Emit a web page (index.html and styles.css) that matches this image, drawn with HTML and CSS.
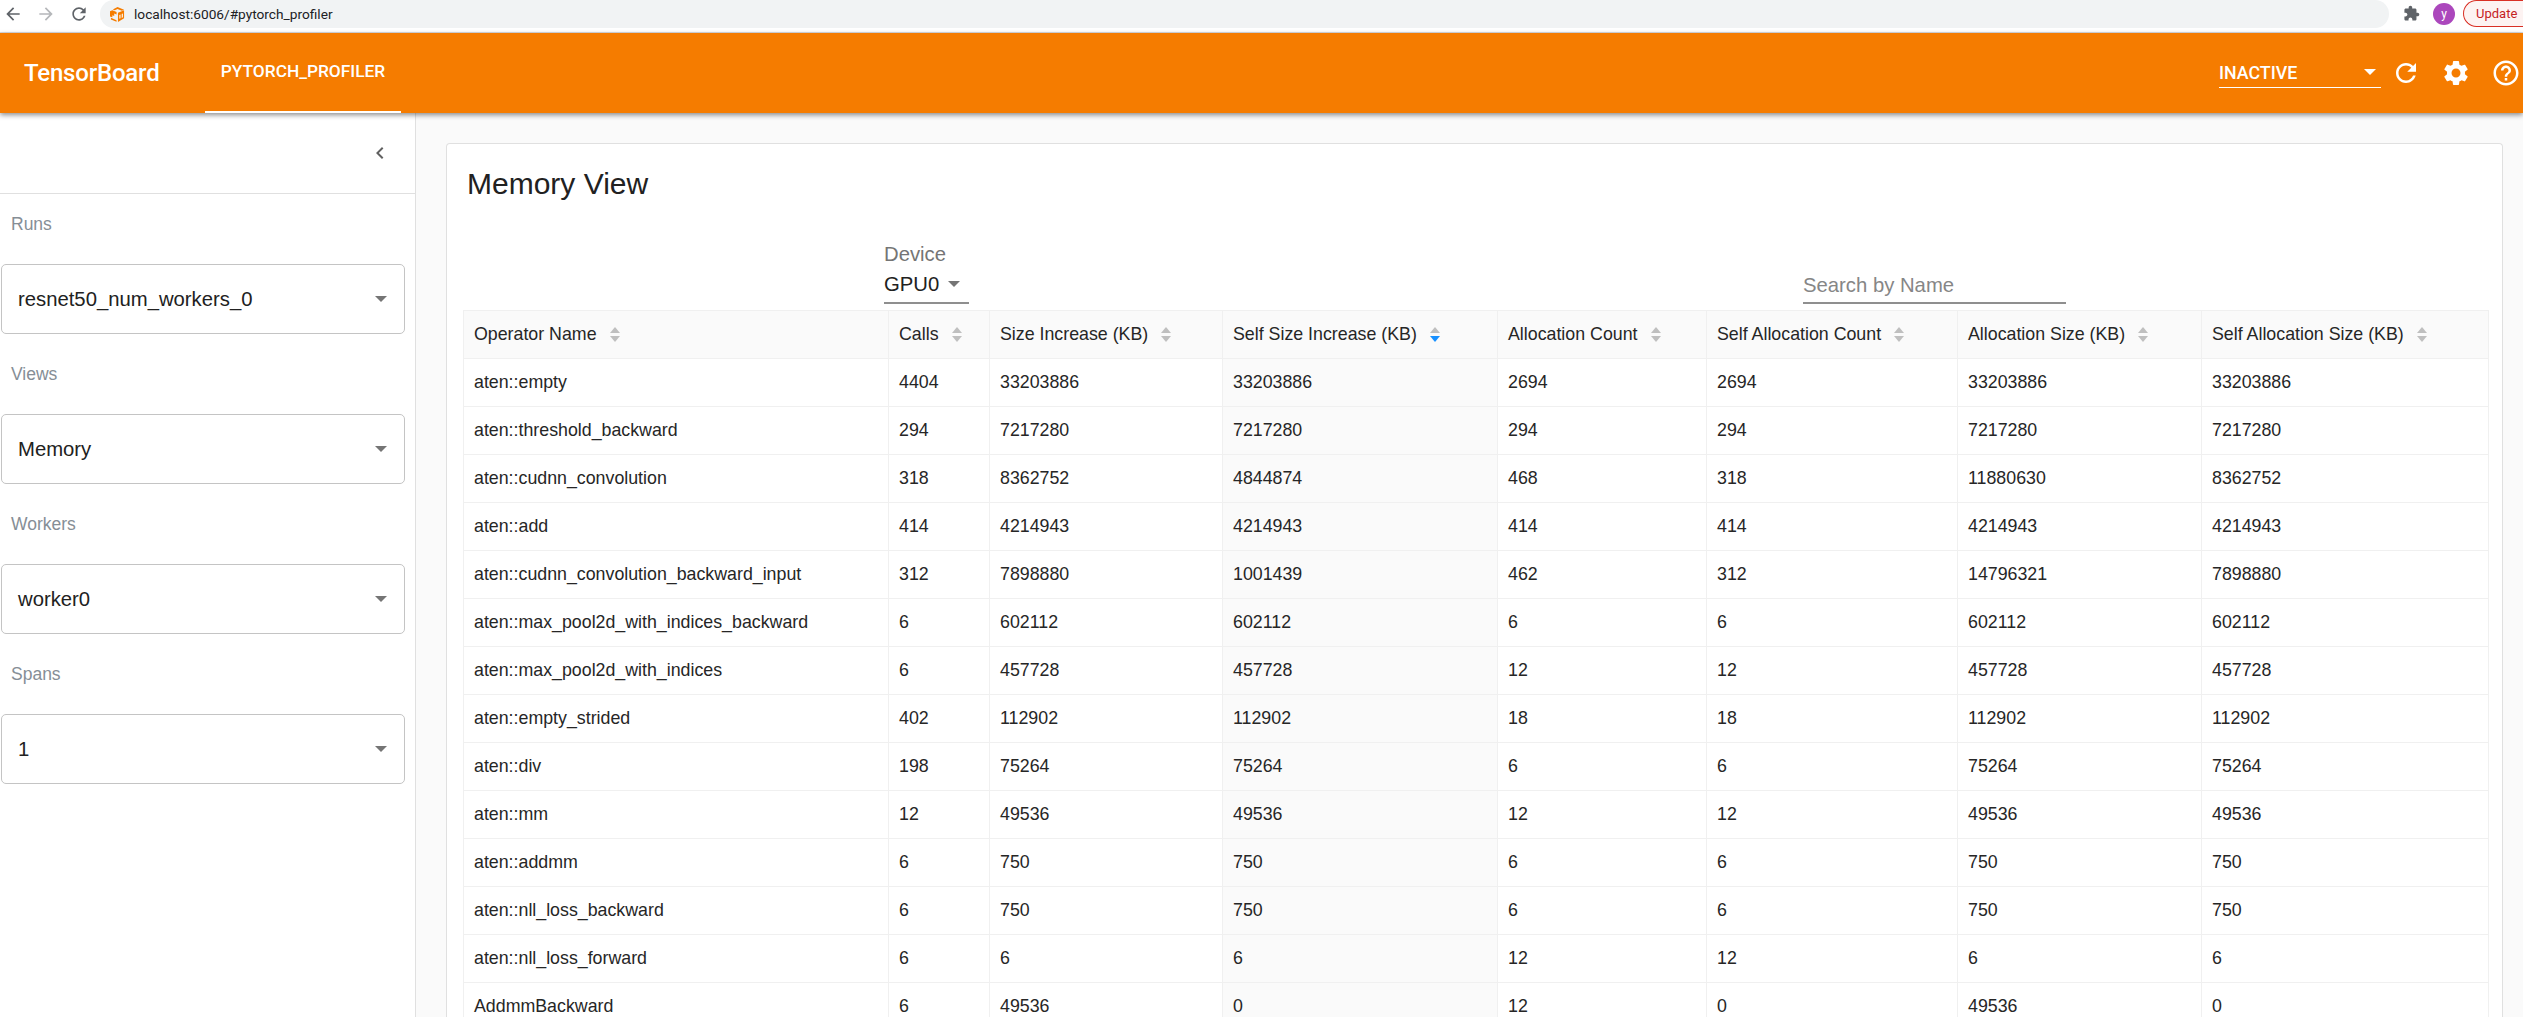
FILE: index.html
```html
<!DOCTYPE html>
<html lang="en">
<head>
<meta charset="utf-8">
<title>TensorBoard</title>
<link rel="stylesheet" href="styles.css">
</head>
<body>
<div class="chrome">
  <svg class="nav-icon" viewBox="0 0 24 24"><path fill="#5f6368" d="M20 11H7.83l5.59-5.59L12 4l-8 8 8 8 1.41-1.41L7.83 13H20v-2z"/></svg>
  <svg class="nav-icon" viewBox="0 0 24 24"><path fill="#b5b7ba" d="M12 4l-1.41 1.41L16.17 11H4v2h12.17l-5.58 5.59L12 20l8-8z"/></svg>
  <svg class="nav-icon" viewBox="0 0 24 24"><path fill="#5f6368" d="M17.65 6.35C16.2 4.9 14.21 4 12 4c-4.42 0-7.99 3.58-7.99 8s3.57 8 7.99 8c3.73 0 6.84-2.55 7.73-6h-2.08c-.82 2.33-3.04 4-5.65 4-3.31 0-6-2.69-6-6s2.69-6 6-6c1.66 0 3.14.69 4.22 1.78L13 11h7V4l-2.35 2.35z"/></svg>
  <div class="omnibox">
    <svg class="favicon" viewBox="0 0 16 16"><path fill="#f57c00" d="M8 0l7 3-2.4 1.1L8 2.2 5 3.4 3 2.6zM0 4.5l2.5-1L7 5.400V8L4.500 6.900V9.500L2.500 8.700V11L0 10zM8.500 6l6.500-2.600V12L8.500 16zM1 11.500l6 2.500v1.800L1 13.300z"/><path fill="#fff" d="M10 8.500l1.200-.5v4l-1.200.6zM12.500 7.500l1.200-.5v4l-1.200.6z"/></svg>
    <span class="url">localhost:6006/#pytorch_profiler</span>
  </div>
  <svg class="puzzle" viewBox="0 0 24 24"><path fill="#5f6368" d="M20.500 11H19V7c0-1.100-.9-2-2-2h-4V3.500C13 2.120 11.880 1 10.500 1S8 2.120 8 3.500V5H4c-1.100 0-1.990.9-1.990 2v3.800H3.500c1.490 0 2.700 1.210 2.700 2.700s-1.210 2.700-2.700 2.700H2V20c0 1.100.9 2 2 2h3.800v-1.500c0-1.490 1.210-2.700 2.700-2.700 1.490 0 2.700 1.210 2.700 2.700V22H17c1.100 0 2-.9 2-2v-4h1.500c1.380 0 2.500-1.120 2.500-2.500S21.880 11 20.500 11z"/></svg>
  <span class="avatar">y</span>
  <span class="update">Update</span>
</div>

<header class="appbar">
  <span class="brand">TensorBoard</span>
  <span class="tab">PYTORCH_PROFILER</span>
  <div class="status"><span>INACTIVE</span><i class="caret caret-white"></i></div>
  <svg class="bar-icon bar-refresh" viewBox="0 0 24 24"><path fill="#fff" d="M17.650 6.350C16.200 4.900 14.210 4 12 4c-4.420 0-7.990 3.580-7.990 8s3.570 8 7.990 8c3.730 0 6.840-2.550 7.730-6h-2.080c-.82 2.330-3.040 4-5.650 4-3.310 0-6-2.690-6-6s2.690-6 6-6c1.660 0 3.140.69 4.220 1.780L13 11h7V4l-2.350 2.350z"/></svg>
  <svg class="bar-icon" viewBox="0 0 24 24"><path fill="#fff" d="M19.140 12.940c.04-.3.06-.61.06-.94 0-.32-.02-.64-.07-.94l2.030-1.580c.18-.14.23-.41.12-.61l-1.920-3.320c-.12-.22-.37-.29-.59-.22l-2.390.96c-.5-.38-1.030-.7-1.620-.94l-.36-2.540c-.04-.24-.24-.41-.48-.41h-3.840c-.24 0-.43.17-.47.41l-.36 2.540c-.59.24-1.130.57-1.620.94l-2.390-.96c-.22-.08-.47 0-.59.22L2.740 8.870c-.12.21-.08.47.12.61l2.030 1.580c-.05.3-.09.63-.09.94s.02.64.07.94l-2.030 1.580c-.18.14-.23.41-.12.61l1.920 3.320c.12.22.37.29.59.22l2.390-.96c.5.38 1.030.7 1.620.94l.36 2.540c.05.24.24.41.48.41h3.840c.24 0 .44-.17.47-.41l.36-2.540c.59-.24 1.130-.56 1.620-.94l2.390.96c.22.08.47 0 .59-.22l1.920-3.320c.12-.22.07-.47-.12-.61l-2.010-1.580zM12 15.600c-1.980 0-3.600-1.620-3.600-3.600s1.620-3.600 3.600-3.600 3.600 1.620 3.600 3.600-1.620 3.600-3.600 3.600z"/></svg>
  <svg class="bar-icon" viewBox="0 0 24 24"><path fill="#fff" d="M11 18h2v-2h-2v2zm1-16C6.480 2 2 6.480 2 12s4.480 10 10 10 10-4.480 10-10S17.520 2 12 2zm0 18c-4.410 0-8-3.590-8-8s3.590-8 8-8 8 3.590 8 8-3.590 8-8 8zm0-14c-2.210 0-4 1.790-4 4h2c0-1.100.9-2 2-2s2 .9 2 2c0 2-3 1.750-3 5h2c0-2.250 3-2.500 3-5 0-2.210-1.790-4-4-4z"/></svg>
</header>

<div class="main">
  <aside class="sidebar">
    <div class="side-head">
      <svg class="chevron" viewBox="0 0 24 24"><path fill="#616161" d="M15.410 7.410L14 6l-6 6 6 6 1.410-1.410L10.830 12z"/></svg>
    </div>
    <div class="group"><div class="group-label">Runs</div><div class="select"><span>resnet50_num_workers_0</span><i class="caret"></i></div></div>
    <div class="group"><div class="group-label">Views</div><div class="select"><span>Memory</span><i class="caret"></i></div></div>
    <div class="group"><div class="group-label">Workers</div><div class="select"><span>worker0</span><i class="caret"></i></div></div>
    <div class="group"><div class="group-label">Spans</div><div class="select"><span>1</span><i class="caret"></i></div></div>
  </aside>

  <section class="content">
    <div class="card">
      <h1 class="title">Memory View</h1>
      <div class="filters">
        <div class="device">
          <div class="device-label">Device</div>
          <div class="device-value"><span>GPU0</span><i class="caret"></i></div>
        </div>
        <div class="search">Search by Name</div>
      </div>
      <table class="grid">
        <colgroup>
          <col class="c1"><col class="c2"><col class="c3"><col class="c4"><col class="c5"><col class="c6"><col class="c7"><col class="c8">
        </colgroup>
        <thead>
          <tr>
            <th><span class="th">Operator Name<i class="sort"></i></span></th>
            <th><span class="th">Calls<i class="sort"></i></span></th>
            <th><span class="th">Size Increase (KB)<i class="sort"></i></span></th>
            <th><span class="th">Self Size Increase (KB)<i class="sort sort-active"></i></span></th>
            <th><span class="th">Allocation Count<i class="sort"></i></span></th>
            <th><span class="th">Self Allocation Count<i class="sort"></i></span></th>
            <th><span class="th">Allocation Size (KB)<i class="sort"></i></span></th>
            <th><span class="th">Self Allocation Size (KB)<i class="sort"></i></span></th>
          </tr>
        </thead>
        <tbody>
          <tr><td>aten::empty</td><td>4404</td><td>33203886</td><td class="sorted">33203886</td><td>2694</td><td>2694</td><td>33203886</td><td>33203886</td></tr>
          <tr><td>aten::threshold_backward</td><td>294</td><td>7217280</td><td class="sorted">7217280</td><td>294</td><td>294</td><td>7217280</td><td>7217280</td></tr>
          <tr><td>aten::cudnn_convolution</td><td>318</td><td>8362752</td><td class="sorted">4844874</td><td>468</td><td>318</td><td>11880630</td><td>8362752</td></tr>
          <tr><td>aten::add</td><td>414</td><td>4214943</td><td class="sorted">4214943</td><td>414</td><td>414</td><td>4214943</td><td>4214943</td></tr>
          <tr><td>aten::cudnn_convolution_backward_input</td><td>312</td><td>7898880</td><td class="sorted">1001439</td><td>462</td><td>312</td><td>14796321</td><td>7898880</td></tr>
          <tr><td>aten::max_pool2d_with_indices_backward</td><td>6</td><td>602112</td><td class="sorted">602112</td><td>6</td><td>6</td><td>602112</td><td>602112</td></tr>
          <tr><td>aten::max_pool2d_with_indices</td><td>6</td><td>457728</td><td class="sorted">457728</td><td>12</td><td>12</td><td>457728</td><td>457728</td></tr>
          <tr><td>aten::empty_strided</td><td>402</td><td>112902</td><td class="sorted">112902</td><td>18</td><td>18</td><td>112902</td><td>112902</td></tr>
          <tr><td>aten::div</td><td>198</td><td>75264</td><td class="sorted">75264</td><td>6</td><td>6</td><td>75264</td><td>75264</td></tr>
          <tr><td>aten::mm</td><td>12</td><td>49536</td><td class="sorted">49536</td><td>12</td><td>12</td><td>49536</td><td>49536</td></tr>
          <tr><td>aten::addmm</td><td>6</td><td>750</td><td class="sorted">750</td><td>6</td><td>6</td><td>750</td><td>750</td></tr>
          <tr><td>aten::nll_loss_backward</td><td>6</td><td>750</td><td class="sorted">750</td><td>6</td><td>6</td><td>750</td><td>750</td></tr>
          <tr><td>aten::nll_loss_forward</td><td>6</td><td>6</td><td class="sorted">6</td><td>12</td><td>12</td><td>6</td><td>6</td></tr>
          <tr><td>AddmmBackward</td><td>6</td><td>49536</td><td class="sorted">0</td><td>12</td><td>0</td><td>49536</td><td>0</td></tr>
        </tbody>
      </table>
    </div>
  </section>
</div>
</body>
</html>
```

FILE: styles.css
```css
* { box-sizing: border-box; }
html, body { margin: 0; height: 100%; overflow: hidden; }
body { font-family: "Liberation Sans", Arial, sans-serif; background: #fafafa; color: #212121; display: flex; flex-direction: column; }

/* Browser chrome */
.chrome { height: 33px; flex: none; background: #fff; border-bottom: 1px solid #dadce0; display: flex; align-items: center; overflow: hidden; padding: 0 0 5px 3px; font-family: Roboto, sans-serif; }
.nav-icon { width: 20px; height: 20px; margin-right: 13px; flex: none; }
.omnibox { width: 2289px; height: 28px; background: #f1f3f4; border-radius: 14px; display: flex; align-items: center; padding-left: 10px; margin: 1px 0 0 -2px; flex: none; }
.favicon { width: 15px; height: 15px; flex: none; margin-right: 9px; margin-left: 0; }
.url { font-size: 13.700px; color: #202124; }
.puzzle { width: 17px; height: 17px; margin-left: 14px; flex: none; }
.avatar { width: 22px; height: 22px; border-radius: 50%; background: #ab47bc; color: #fff; font-size: 12px; display: flex; align-items: center; justify-content: center; margin-left: 13px; flex: none; }
.update { margin-left: 8px; width: 80px; height: 27px; flex: none; border: 1px solid #d93025; border-radius: 14px 0 0 14px; border-right: 0; background: #fdf3f2; color: #c5221f; font-size: 13px; padding: 5px 0 0 12px; }

/* App bar */
.appbar { height: 80px; flex: none; background: #f57c00; color: #fff; display: flex; align-items: center; box-shadow: 0 2px 5px rgba(0,0,0,.45); position: relative; z-index: 2; padding-left: 24px; font-family: Roboto, sans-serif; }
.brand { font-size: 24px; font-weight: 500; width: 181px; letter-spacing: -.2px; }
.tab { width: 196px; height: 80px; border-bottom: 2px solid #fff; font-size: 17.300px; font-weight: 500; display: flex; align-items: center; justify-content: center; padding-bottom: 3px; }
.status { width: 162px; height: 34px; margin-left: auto; border-bottom: 1px solid #fff; font-size: 17.800px; font-weight: 500; display: flex; align-items: center; justify-content: space-between; padding: 3px 5px 0 0; margin-top: -4px; }
.bar-icon { width: 30px; height: 30px; flex: none; margin-left: 20px; }
.bar-refresh { margin-left: 10px; }
.appbar .bar-icon:last-child { margin-right: 2px; }

.caret { display: block; width: 0; height: 0; border-left: 6px solid transparent; border-right: 6px solid transparent; border-top: 6px solid #757575; flex: none; }
.caret-white { border-top-color: #fff; }

/* Layout */
.main { flex: 1; display: flex; min-height: 0; }
.sidebar { width: 416px; flex: none; background: #fff; border-right: 1px solid #e0e0e0; }
.side-head { height: 81px; border-bottom: 1px solid #e0e0e0; display: flex; justify-content: flex-end; padding: 28px 23px 0 0; }
.chevron { width: 24px; height: 24px; }
.group { padding: 10px 10px 10px 1px; }
.group-label { height: 40px; line-height: 40px; margin-bottom: 20px; padding-left: 10px; font-size: 17.500px; color: #868e96; }
.select { width: 404px; height: 70px; border: 1px solid #c4c4c4; border-radius: 5px; display: flex; align-items: center; justify-content: space-between; padding: 0 17px 0 16px; font-size: 20.300px; color: #212121; }

.content { flex: 1; min-width: 0; padding: 30px 20px 0 30px; }
.card { background: #fff; border: 1px solid #e0e0e0; border-bottom: 0; border-radius: 4px 4px 0 0; padding: 0 16px; height: 1000px; }
.title { margin: 0; font-size: 30px; font-weight: 400; line-height: 40px; padding: 20px 0 0 4px; color: #212121; }

/* Filters */
.filters { display: flex; height: 106px; padding-left: 421px; }
.device { width: 85px; margin-top: 36px; height: 64px; border-bottom: 2px solid #8f8f8f; }
.device-label { font-size: 20.300px; line-height: 28px; color: #757575; height: 28px; }
.device-value { display: flex; align-items: center; height: 32px; font-size: 20.300px; gap: 9px; color: #212121; }
.search { width: 263px; margin-left: 834px; margin-top: 66px; height: 34px; border-bottom: 2px solid #8f8f8f; font-size: 20.300px; color: #868686; line-height: 30px; }

/* Table */
.grid { border-collapse: separate; border-spacing: 0; table-layout: fixed; width: 2025px; margin-top: 0; border-top: 1px solid #f0f0f0; border-left: 1px solid #f0f0f0; font-size: 17.800px; color: #262626; }
.c1 { width: 425px; } .c2 { width: 101px; } .c3 { width: 233px; } .c4 { width: 275px; }
.c5 { width: 209px; } .c6 { width: 251px; } .c7 { width: 244px; } .c8 { width: 287px; }
.grid th, .grid td { height: 48px; padding: 0 10px; border-right: 1px solid #f0f0f0; border-bottom: 1px solid #f0f0f0; text-align: left; font-weight: 400; white-space: nowrap; }
.grid th { background: #fafafa; }
.grid td.sorted { background: #fafafa; }
.th { display: inline-flex; align-items: center; gap: 13px; }
.sort { display: flex; flex-direction: column; gap: 3px; flex: none; }
.sort::before, .sort::after { content: ""; display: block; width: 0; height: 0; border-left: 5px solid transparent; border-right: 5px solid transparent; }
.sort::before { border-bottom: 6px solid #bfbfbf; }
.sort::after { border-top: 6px solid #bfbfbf; }
.sort-active::after { border-top-color: #1890ff; }
```
